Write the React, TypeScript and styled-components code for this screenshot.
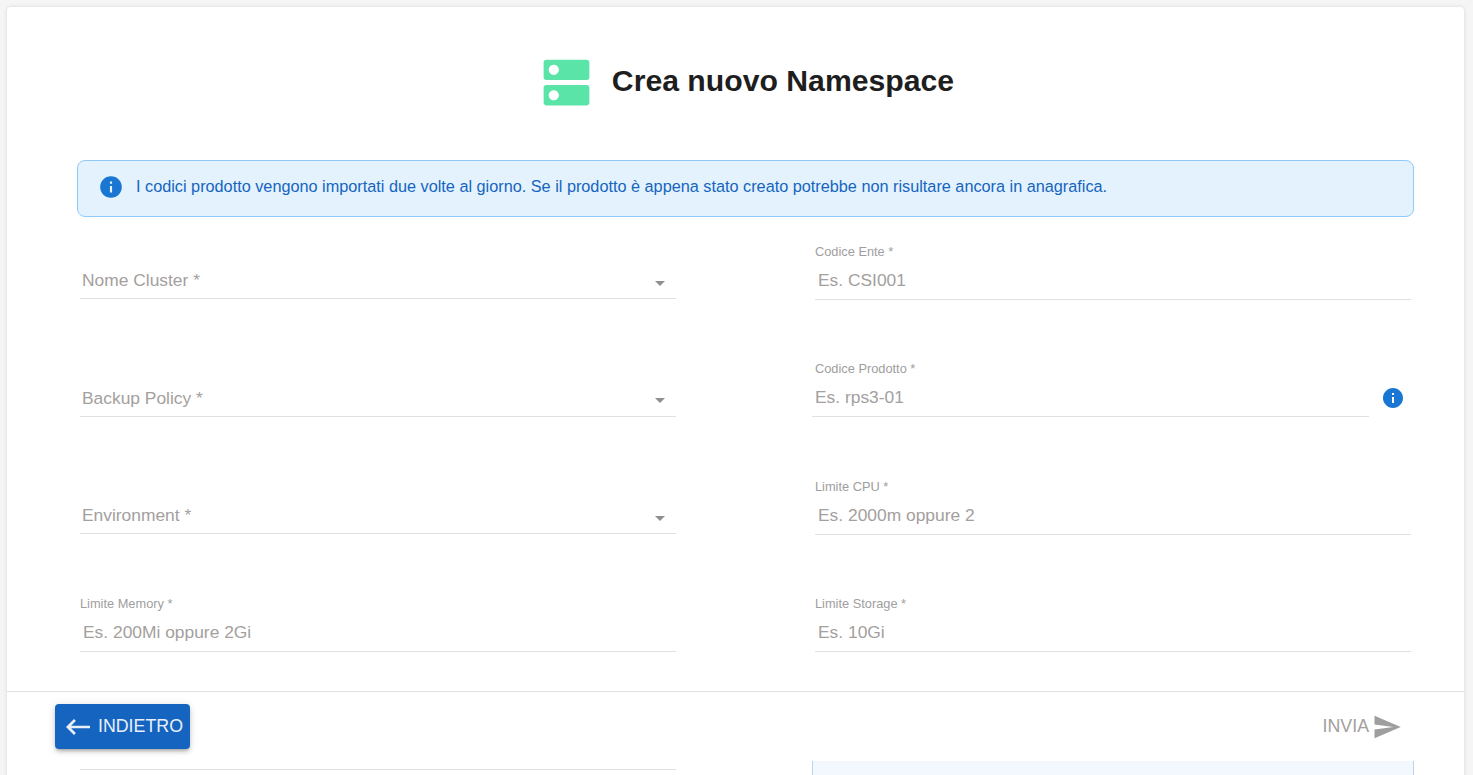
import React from 'react';
import styled, { createGlobalStyle } from 'styled-components';

const GlobalStyle = createGlobalStyle`
  html, body {
    margin: 0;
    height: 100%;
    overflow: hidden;
    background: #f5f5f5;
    font-family: 'Liberation Sans', Arial, sans-serif;
  }
  * {
    box-sizing: border-box;
  }
`;

const Page = styled.div`
  height: 775px;
  padding: 7px 9px 0 7px;
  overflow: hidden;
`;
const Card = styled.div`
  position: relative;
  height: 900px;
  background: #fff;
  border-radius: 4px 4px 0 0;
  box-shadow: 0 0 4px rgba(0, 0, 0, 0.12);
`;
const Header = styled.div`
  display: flex;
  justify-content: center;
  align-items: center;
  gap: 15px;
  height: 153px;
  padding: 0 0 2px 19px;
`;
const Title = styled.h1`
  margin: 0 0 4px;
  color: #1e1e1e;
  font-size: 30.2px;
  font-weight: 700;
`;
const AlertWrap = styled.div`
  padding: 0 50px 0 70px;
`;
const Alert = styled.div`
  display: flex;
  align-items: center;
  gap: 12px;
  height: 57px;
  padding: 0 20px 4px;
  border: 1px solid #90caf9;
  border-radius: 8px;
  background: #e3f2fd;
  color: #1565c0;
  font-size: 16.25px;
`;
const Form = styled.div`
  display: grid;
  grid-template-columns: 596px 596px;
  grid-auto-rows: 117.6px;
  column-gap: 139px;
  align-items: end;
  padding: 0 53px 0 73px;
  margin-top: -35px;
`;
const Field = styled.div`
  display: flex;
  flex-direction: column;
`;
const FieldRow = styled.div`
  display: flex;
  align-items: center;
  margin-left: -3px;
  padding-right: 6px;
`;
const Grow = styled.div`
  flex: 1;
  min-width: 0;
  margin-right: 12px;
`;
const Label = styled.label`
  height: 17px;
  margin-bottom: 2px;
  color: #9e9e9e;
  font-size: 12.8px;
  line-height: 17px;
`;
const TextInput = styled.input`
  display: block;
  width: 100%;
  height: 38px;
  padding: 0 0 0 3px;
  border: 0;
  border-bottom: 1px solid #e0e0e0;
  outline: none;
  background: transparent;
  font-size: 17.4px;
  font-family: 'Liberation Sans', Arial, sans-serif;
  &::placeholder {
    color: #a3a09e;
    opacity: 1;
  }
`;
const SelectBox = styled.div`
  display: flex;
  align-items: center;
  justify-content: space-between;
  height: 36px;
  margin-bottom: 0.4px;
  padding: 0 4px 0 2px;
  border-bottom: 1px solid #e0e0e0;
  color: #a3a09e;
  font-size: 17.4px;
`;
const Caret = styled.span`
  display: flex;
  margin-top: 4px;
`;
const Footer = styled.div`
  position: absolute;
  top: 684px;
  left: 0;
  right: 0;
  display: flex;
  justify-content: space-between;
  align-items: flex-start;
  height: 69px;
  padding: 12px 62px 0 48px;
  border-top: 1px solid #e0e0e0;
  background: #fff;
`;
const BackButton = styled.button`
  display: flex;
  align-items: center;
  gap: 4px;
  height: 45px;
  padding: 0 7px;
  border: 0;
  border-radius: 4px;
  background: #1565c0;
  color: #e9f0f9;
  font-size: 17.8px;
  font-family: 'Liberation Sans', Arial, sans-serif;
  box-shadow: 0 3px 3px -2px rgba(0, 0, 0, 0.2), 0 3px 4px 0 rgba(0, 0, 0, 0.14),
    0 1px 8px 0 rgba(0, 0, 0, 0.12);
`;
const SendButton = styled.button`
  display: flex;
  align-items: center;
  gap: 3px;
  height: 45px;
  padding: 0;
  border: 0;
  background: transparent;
  color: #a3a09e;
  font-size: 17.8px;
  font-family: 'Liberation Sans', Arial, sans-serif;
`;
const Note = styled.div`
  align-self: start;
  height: 90px;
  margin: 109px -3px 0;
  border-left: 1px solid #bbd4f0;
  border-right: 1px solid #bbd4f0;
  background: #f3f7fe;
`;

const Icon = ({ d, size, color }: { d: string; size: number; color: string }) => (
  <svg width={size} height={size} viewBox="0 0 24 24" fill={color}>
    <path d={d} />
  </svg>
);

const dnsPath =
  'M20 13H4c-.55 0-1 .45-1 1v6c0 .55.45 1 1 1h16c.55 0 1-.45 1-1v-6c0-.55-.45-1-1-1zM7 19c-1.1 0-2-.9-2-2s.9-2 2-2 2 .9 2 2-.9 2-2 2zM20 3H4c-.55 0-1 .45-1 1v6c0 .55.45 1 1 1h16c.55 0 1-.45 1-1V4c0-.55-.45-1-1-1zM7 9c-1.1 0-2-.9-2-2s.9-2 2-2 2 .9 2 2-.9 2-2 2z';
const infoPath =
  'M12 2C6.48 2 2 6.48 2 12s4.48 10 10 10 10-4.48 10-10S17.52 2 12 2zm1 15h-2v-6h2v6zm0-8h-2V7h2v2z';
const backPath = 'M21 11H6.83l3.58-3.58L9 6l-6 6 6 6 1.41-1.41L6.83 13H21z';
const sendPath = 'M2.01 21 23 12 2.01 3 2 10l15 2-15 2z';
const caretPath = 'm7 10 5 5 5-5z';

const Select = ({ label }: { label: string }) => (
  <Field>
    <SelectBox>
      {label}
      <Caret>
        <Icon d={caretPath} size={24} color="#8f8f8f" />
      </Caret>
    </SelectBox>
  </Field>
);

const Input = ({ label, placeholder }: { label: string; placeholder: string }) => (
  <Field>
    <Label>{label}</Label>
    <TextInput placeholder={placeholder} />
  </Field>
);

export default function App() {
  return (
    <Page>
      <GlobalStyle />
      <Card>
        <Header>
          <Icon d={dnsPath} size={61} color="#5ae4a7" />
          <Title>Crea nuovo Namespace</Title>
        </Header>
        <AlertWrap>
          <Alert>
            <Icon d={infoPath} size={26} color="#1976d2" />
            I codici prodotto vengono importati due volte al giorno. Se il prodotto è appena stato
            creato potrebbe non risultare ancora in anagrafica.
          </Alert>
        </AlertWrap>
        <Form>
          <Select label="Nome Cluster *" />
          <Input label="Codice Ente *" placeholder="Es. CSI001" />
          <Select label="Backup Policy *" />
          <Field>
            <Label>Codice Prodotto *</Label>
            <FieldRow>
              <Grow>
                <TextInput placeholder="Es. rps3-01" />
              </Grow>
              <Icon d={infoPath} size={24} color="#1976d2" />
            </FieldRow>
          </Field>
          <Select label="Environment *" />
          <Input label="Limite CPU *" placeholder="Es. 2000m oppure 2" />
          <Input label="Limite Memory *" placeholder="Es. 200Mi oppure 2Gi" />
          <Input label="Limite Storage *" placeholder="Es. 10Gi" />
          <Select label="" />
          <Note />
        </Form>
        <Footer>
          <BackButton>
            <Icon d={backPath} size={32} color="#e9f0f9" />
            INDIETRO
          </BackButton>
          <SendButton>
            INVIA
            <Icon d={sendPath} size={30} color="#9e9e9e" />
          </SendButton>
        </Footer>
      </Card>
    </Page>
  );
}
